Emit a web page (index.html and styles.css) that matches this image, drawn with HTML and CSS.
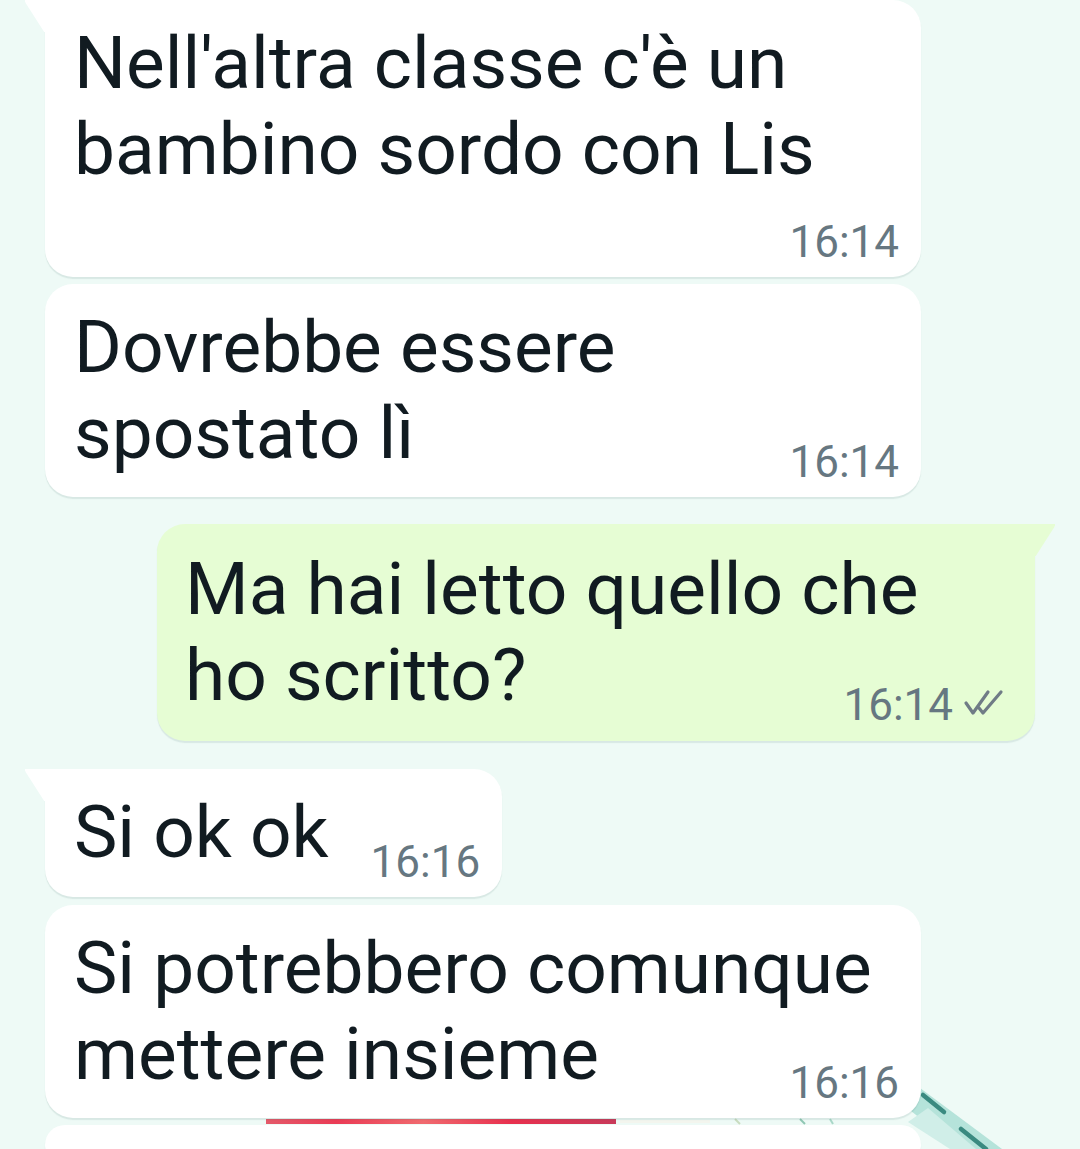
FILE: index.html
```html
<!DOCTYPE html>
<html lang="it">
<head>
<meta charset="utf-8">
<title>Chat</title>
<link rel="stylesheet" href="styles.css">
</head>
<body>
<div class="chat">
  <svg class="wallpaper" width="1080" height="1149" viewBox="0 0 1080 1149" aria-hidden="true">
    <defs>
      <linearGradient id="red" x1="0" x2="1" y1="0" y2="0">
        <stop offset="0" stop-color="#e45a6a"/>
        <stop offset="0.2" stop-color="#ea3b55"/>
        <stop offset="0.45" stop-color="#f06a6f"/>
        <stop offset="0.7" stop-color="#e8304e"/>
        <stop offset="1" stop-color="#c83a5a"/>
      </linearGradient>
    </defs>
    <rect x="266" y="1119" width="350" height="5" fill="url(#red)"/>
    <rect x="620" y="1120" width="90" height="3" fill="#f3f5ee"/>
    <line x1="735" y1="1119" x2="740" y2="1124" stroke="#c9dcc0" stroke-width="2"/>
    <line x1="800" y1="1119" x2="805" y2="1124" stroke="#8fc7b4" stroke-width="2"/>
    <line x1="830" y1="1119" x2="833" y2="1124" stroke="#a9d8c8" stroke-width="2"/>
    <polygon points="900,1102 920,1088 1002,1149 958,1149" fill="#b5e3da"/>
    <polygon points="908,1122 928,1108 976,1149 950,1149" fill="#d0eee8"/>
    <line x1="923" y1="1095" x2="944" y2="1112" stroke="#3a8a80" stroke-width="4.5" stroke-linecap="round"/>
    <line x1="961" y1="1129" x2="986" y2="1149" stroke="#3a8a80" stroke-width="4.5" stroke-linecap="round"/>
  </svg>

  <div class="bubble in tail wide">
    <p class="text">Nell'altra classe c'è un<br>bambino sordo con Lis</p>
    <div class="meta below"><span class="time">16:14</span></div>
  </div>

  <div class="bubble in wide gap-s">
    <p class="text">Dovrebbe essere<br>spostato lì</p>
    <div class="meta inline"><span class="time">16:14</span></div>
  </div>

  <div class="bubble out tail gap-l">
    <p class="text">Ma hai letto quello che<br>ho scritto?</p>
    <div class="meta inline">
      <span class="time">16:14</span>
      <svg class="ticks" width="42" height="30" viewBox="0 0 42 30" aria-hidden="true">
        <path d="M3 14 L10 24 L25 3" fill="none" stroke="#707c86" stroke-width="3.2" stroke-linecap="round" stroke-linejoin="round"/>
        <path d="M16 19 L20 24 L38 3" fill="none" stroke="#707c86" stroke-width="3.2" stroke-linecap="round" stroke-linejoin="round"/>
      </svg>
    </div>
  </div>

  <div class="bubble in tail row gap-xl">
    <p class="text">Si ok ok</p>
    <span class="time row-time">16:16</span>
  </div>

  <div class="bubble in wide gap-m">
    <p class="text">Si potrebbero comunque<br>mettere insieme</p>
    <div class="meta inline"><span class="time">16:16</span></div>
  </div>

  <div class="bubble in wide stub gap-s"></div>
</div>
</body>
</html>
```

FILE: styles.css
```css
html, body {
  margin: 0;
  padding: 0;
}

body {
  width: 1080px;
  height: 1149px;
  overflow: hidden;
  background: #eefaf6;
  font-family: Roboto, "Noto Sans", "Liberation Sans", sans-serif;
  color: #111b21;
}

.chat {
  position: relative;
  height: 1149px;
  overflow: hidden;
  display: flex;
  flex-direction: column;
  align-items: flex-start;
  padding: 0 0 0 45px;
}

.wallpaper {
  position: absolute;
  left: 0;
  top: 0;
  z-index: 0;
}

.bubble {
  position: relative;
  z-index: 1;
  box-sizing: border-box;
  background: #ffffff;
  border-radius: 28px;
  padding: 20px 22px 15px 29px;
  box-shadow: 0 2px 1px rgba(60, 110, 100, 0.12);
}

.bubble.wide {
  width: 876px;
}

.gap-s {
  margin-top: 7px;
}

.gap-m {
  margin-top: 8px;
}

.gap-l {
  margin-top: 27px;
}

.gap-xl {
  margin-top: 28px;
}

.bubble.out {
  margin-left: 112px;
  width: 878px;
  background: #e6fdd4;
  padding: 22px 30px 16px 28px;
}

.bubble.in.tail {
  border-top-left-radius: 0;
}

.bubble.in.tail::before {
  content: "";
  position: absolute;
  left: -20px;
  top: 0;
  width: 20px;
  height: 32px;
  background: inherit;
  clip-path: polygon(0 0, 100% 0, 100% 100%, 96% 100%, 4% 10%, 0 4%);
}

.bubble.out.tail {
  border-top-right-radius: 0;
}

.bubble.out.tail::before {
  content: "";
  position: absolute;
  right: -20px;
  top: 0;
  width: 20px;
  height: 32px;
  background: inherit;
  clip-path: polygon(0 0, 100% 0, 100% 4%, 96% 10%, 4% 100%, 0 100%);
}

.text {
  margin: 0;
  font-size: 73px;
  line-height: 86px;
  white-space: nowrap;
}

.meta {
  display: flex;
  justify-content: flex-end;
  align-items: center;
  height: 40px;
}

.meta.below {
  margin-top: 30px;
}

.meta.inline {
  margin-top: -34px;
}

.bubble.out .meta.inline {
  margin-top: -33px;
}

.time {
  font-size: 44px;
  line-height: 40px;
  color: #667781;
}

.ticks {
  margin-left: 10px;
  margin-top: -2px;
}

.bubble.row {
  display: flex;
  align-items: flex-start;
  padding-right: 22px;
}

.row-time {
  margin-left: 42px;
  margin-top: 53px;
}

.bubble.stub {
  flex: 0 0 auto;
  height: 40px;
}
```
